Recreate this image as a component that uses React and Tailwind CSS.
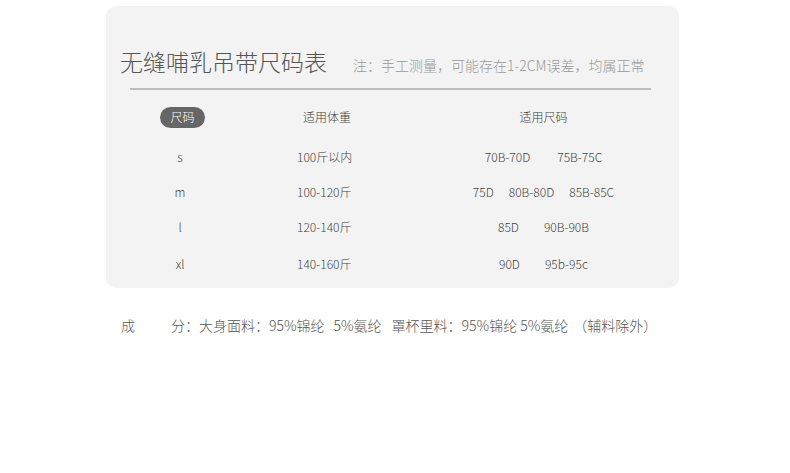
export default function App() {
  const rows = [
    { size: "s", weight: "100斤以内", codes: ["70B-70D", "75B-75C"], gap: "gap-[27px]" },
    { size: "m", weight: "100-120斤", codes: ["75D", "80B-80D", "85B-85C"], gap: "gap-[15px]" },
    { size: "l", weight: "120-140斤", codes: ["85D", "90B-90B"], gap: "gap-[25px]" },
    { size: "xl", weight: "140-160斤", codes: ["90D", "95b-95c"], gap: "gap-[25px]" },
  ];

  return (
    <div
      className="w-[790px] h-[473px] bg-white font-light"
      style={{ fontFamily: '"Noto Sans CJK SC", "Noto Sans", sans-serif' }}
    >
      <div className="pt-[6px] pl-[106px]">
        <div className="w-[573px] h-[282px] bg-[#f3f3f3] rounded-[10px] pt-[39px]">
          <div className="flex items-baseline pl-[14px]">
            <span className="text-[23px] leading-[32px] text-[#555]">无缝哺乳吊带尺码表</span>
            <span className="ml-[26px] text-[14px] text-[#999]">
              注：手工测量，可能存在1-2CM误差，均属正常
            </span>
          </div>
          <div className="ml-[24px] w-[521px] h-[2px] mt-[11px] bg-[#bdbdbd]" />

          <div className="grid grid-cols-[152px_138px_283px] mt-[16px] h-[22px] items-center text-[12px] text-[#444]">
            <div className="flex justify-center pl-[1px]">
              <span className="w-[45px] h-[21px] rounded-full bg-[#666] text-white flex items-center justify-center">
                尺码
              </span>
            </div>
            <div className="text-center">适用体重</div>
            <div className="text-center pl-[12px]">适用尺码</div>
          </div>

          <div className="mt-[11px]">
            {rows.map((r, i) => (
              <div
                key={r.size}
                className={`grid grid-cols-[148px_142px_283px] h-[35px] items-center text-[12px] text-[#444] ${
                  i === 3 ? "mt-[2px]" : ""
                }`}
              >
                <div className="text-center">{r.size}</div>
                <div className="pl-[43px]">{r.weight}</div>
                <div className={`flex justify-center pl-[12px] ${r.gap}`}>
                  {r.codes.map((c) => (
                    <span key={c}>{c}</span>
                  ))}
                </div>
              </div>
            ))}
          </div>
        </div>
      </div>

      <div className="flex pl-[121px] mt-[27px] text-[14px] leading-[20px] text-[#555]">
        <span>成</span>
        <span className="ml-[36px]">分：大身面料：95%锦纶</span>
        <span className="ml-[9px]">5%氨纶</span>
        <span className="ml-[10px]">罩杯里料：95%锦纶</span>
        <span className="ml-[3px]">5%氨纶</span>
        <span className="ml-[5px]">（辅料除外）</span>
      </div>
    </div>
  );
}
